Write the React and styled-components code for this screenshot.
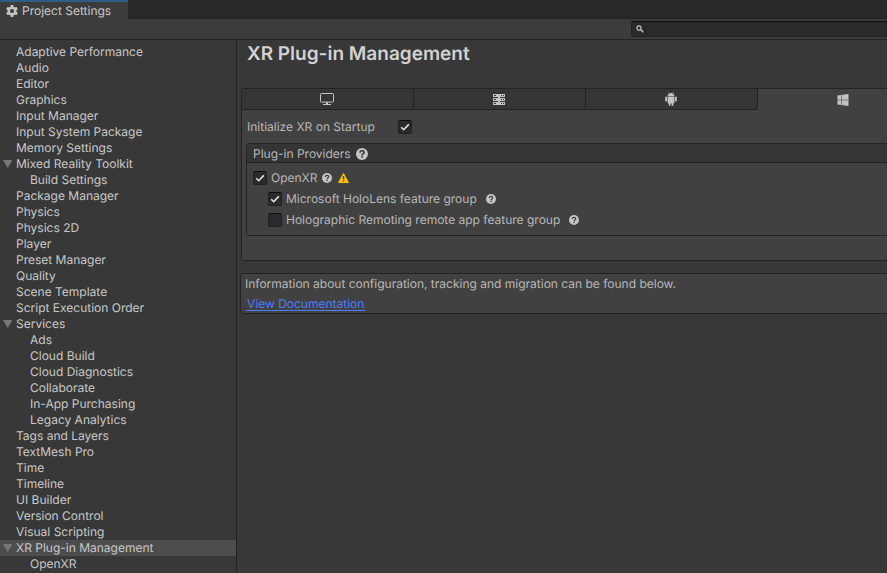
import React, { useId, useState } from "react";
import styled, { createGlobalStyle } from "styled-components";

const color = {
  strip: "#282828",
  bar: "#3c3c3c",
  page: "#383838",
  panel: "#414141",
  header: "#353535",
  line: "#232323",
  accent: "#2c5d87",
  text: "#c8c8c8",
  label: "#b8b8b8",
  icon: "#c4c4c4",
  selected: "#4d4d4d",
  link: "#4c7eff",
};

const GlobalStyle = createGlobalStyle`
  *, *::before, *::after { box-sizing: border-box; }
  html, body { margin: 0; background: ${color.page}; }
  body { overflow: hidden; }
  body, button, input {
    font-family: Inter, "Liberation Sans", sans-serif;
    font-size: 12px;
    line-height: 16px;
    color: ${color.text};
    text-rendering: geometricPrecision;
  }
  svg { display: block; flex: none; }
`;

const Window = styled.div`
  display: flex;
  flex-direction: column;
  height: 100vh;
`;

const TabStrip = styled.header`
  display: flex;
  height: 19px;
  flex: none;
  background: ${color.strip};
  box-shadow: inset 0 -1px ${color.line};
`;

const WindowTab = styled.h1`
  display: flex;
  align-items: center;
  gap: 4px;
  margin: 0;
  padding: 1px 17px 0 6px;
  border-top: 2px solid ${color.accent};
  background: ${color.bar};
  font-size: 12px;
  font-weight: 400;
`;

const Toolbar = styled.div`
  display: flex;
  justify-content: flex-end;
  flex: none;
  height: 21px;
  padding: 2px 0;
  background: ${color.bar};
  border-bottom: 1px solid ${color.line};
`;

const SearchField = styled.label`
  display: flex;
  align-items: center;
  gap: 4px;
  width: 256px;
  height: 16px;
  padding-left: 4px;
  border: 1px solid #212121;
  border-top-color: #0d0d0d;
  border-right: 0;
  border-radius: 3px 0 0 3px;
  background: #2a2a2a;
`;

const SearchInput = styled.input`
  flex: 1;
  min-width: 0;
  height: 14px;
  padding: 0;
  border: 0;
  outline: 0;
  background: transparent;
`;

const Columns = styled.div`
  display: grid;
  grid-template-columns: 237px minmax(0, 1fr);
  flex: 1;
  min-height: 0;
`;

const Sidebar = styled.nav`
  padding-top: 4px;
  overflow: hidden;
  border-right: 1px solid ${color.line};
`;

const TreeRow = styled.div`
  display: flex;
  align-items: center;
  height: 16px;
  padding-left: ${(p) => (p.$nested ? 14 : 0)}px;
  background: ${(p) => (p.$selected ? color.selected : "transparent")};
`;

const Foldout = styled.button`
  display: flex;
  align-items: center;
  width: 16px;
  height: 16px;
  padding: 0 0 0 3px;
  border: 0;
  background: none;
`;

const FoldoutSpace = styled.span`
  width: 16px;
`;

const TreeItem = styled.button`
  flex: 1;
  height: 16px;
  padding: 0;
  border: 0;
  background: none;
  text-align: left;
  white-space: nowrap;
`;

const Main = styled.main`
  overflow: hidden;
  padding-left: 3px;
`;

const PageTitle = styled.h2`
  margin: 0 0 20px;
  padding: 2px 7px;
  font-size: 19px;
  line-height: 24px;
  font-weight: 600;
  color: #d2d2d2;
`;

/* The settings body is wider than the window and is clipped at its right edge. */
const Body = styled.div`
  display: flex;
  flex-direction: column;
  gap: 12px;
  margin-right: -44px;
`;

const Panel = styled.section`
  margin-left: 1px;
  padding-bottom: 24px;
  border: 1px solid ${color.line};
  border-radius: 3px;
  background: ${color.panel};
`;

const PlatformTabs = styled.div`
  display: grid;
  grid-template-columns: repeat(4, 1fr);
`;

const PlatformTab = styled.button`
  display: flex;
  align-items: center;
  justify-content: center;
  height: 21px;
  padding: 0 2px 0 0;
  border: 0 solid ${color.line};
  border-width: ${(p) => (p["aria-selected"] ? "0" : "0 1px 1px 0")};
  background: ${(p) => (p["aria-selected"] ? color.panel : color.header)};
`;

const SettingRow = styled.div`
  display: grid;
  grid-template-columns: 151px auto;
  align-items: center;
  justify-content: start;
  height: 33px;
  padding-left: 5px;
`;

const Label = styled.label`
  color: ${color.label};
  white-space: nowrap;
`;

const Providers = styled.section`
  margin-left: 4px;
  border: 1px solid ${color.line};
  border-radius: 3px;
`;

const ProvidersHeader = styled.h3`
  display: flex;
  align-items: center;
  gap: 5px;
  height: 19px;
  margin: 0;
  padding: 1px 6px 0;
  border-bottom: 1px solid ${color.line};
  background: ${color.header};
  color: ${color.label};
  font-size: 12px;
  font-weight: 400;
`;

const ProviderList = styled.div`
  padding: 4px 6px 5px;
`;

const ProviderRow = styled.div`
  display: flex;
  align-items: center;
  gap: 4px;
  height: 21px;
  padding-left: ${(p) => (p.$nested ? 15 : 0)}px;
`;

const Badges = styled.span`
  display: flex;
  align-items: center;
  gap: 6px;
  margin-left: ${(p) => (p.$nested ? 5 : 0)}px;
`;

const CheckFrame = styled.span`
  position: relative;
  display: block;
  width: 14px;
  height: 14px;
`;

const CheckInput = styled.input`
  appearance: none;
  display: block;
  width: 14px;
  height: 14px;
  margin: 0;
  border: 1px solid #212121;
  border-top-color: #0d0d0d;
  border-radius: 2px;
  background: #2a2a2a;
`;

const CheckMark = styled.svg`
  position: absolute;
  inset: 0;
  pointer-events: none;
`;

const InfoBox = styled.section`
  padding: 2px 4px;
  border: 1px solid ${color.line};
  border-radius: 3px;
  background: ${color.panel};
  color: ${color.label};
`;

const InfoText = styled.p`
  margin: 0 0 6px;
`;

const DocLink = styled.a`
  display: block;
  width: fit-content;
  margin-left: 1px;
  padding: 0 1px;
  border-bottom: 1px solid ${color.link};
  color: ${color.link};
  line-height: 12px;
  text-decoration: none;
`;

const GearIcon = () => (
  <svg width="12" height="12" viewBox="0 0 12 12" aria-hidden="true">
    <g fill={color.icon}>
      <rect x="4.6" y="0" width="2.8" height="12" rx=".6" />
      <rect x="4.6" y="0" width="2.8" height="12" rx=".6" transform="rotate(60 6 6)" />
      <rect x="4.6" y="0" width="2.8" height="12" rx=".6" transform="rotate(120 6 6)" />
      <circle cx="6" cy="6" r="4.5" />
    </g>
    <circle cx="6" cy="6" r="2.1" fill={color.bar} />
  </svg>
);

const SearchIcon = () => (
  <svg width="8" height="8" viewBox="0 0 8 8" fill="none" stroke={color.icon} aria-hidden="true">
    <circle cx="3" cy="3" r="2.1" strokeWidth="1.1" />
    <path d="M4.6 4.6 7.2 7.2" strokeWidth="1.4" />
  </svg>
);

const TriangleIcon = () => (
  <svg width="10" height="8" viewBox="0 0 10 8" aria-hidden="true">
    <path d="M0 0h9.4L4.7 8z" fill="#767676" />
  </svg>
);

const MonitorIcon = () => (
  <svg width="14" height="12" viewBox="0 0 14 12" aria-hidden="true">
    <rect x=".5" y=".5" width="13" height="8.6" rx=".8" fill="none" stroke={color.icon} />
    <path d="M6 9h2v2H6zM3 11h8v1H3z" fill={color.icon} />
  </svg>
);

const ServerIcon = () => (
  <svg width="12" height="11" viewBox="0 0 12 11" aria-hidden="true">
    <path d="M0 0h12v3H0zM0 4h12v3H0zM0 8h12v3H0zM5 3h2v5H5z" fill={color.icon} />
    <path
      d="M1 1h2v1H1zM1 5h2v1H1zM1 9h2v1H1zM8 1h1v1H8zM10 1h1v1h-1zM8 5h1v1H8zM10 5h1v1h-1zM8 9h1v1H8zM10 9h1v1h-1z"
      fill={color.header}
    />
  </svg>
);

const AndroidIcon = () => (
  <svg width="12" height="14" viewBox="0 0 12 14" fill={color.icon} aria-hidden="true">
    <path d="M2.6 4C2.6 2.4 3.9 1 6 1s3.4 1.4 3.4 3z" />
    <path d="M3.5.2 4.4 1.7M8.5.2 7.6 1.7" stroke={color.icon} strokeWidth=".6" />
    <path d="M2.6 4.6h6.8v6.1a.7.7 0 0 1-.7.7H3.3a.7.7 0 0 1-.7-.7z" />
    <rect x="3.8" y="10" width="1.6" height="4" rx=".7" />
    <rect x="6.6" y="10" width="1.6" height="4" rx=".7" />
    <rect x=".2" y="4.6" width="1.8" height="5" rx=".8" />
    <rect x="10" y="4.6" width="1.8" height="5" rx=".8" />
    <circle cx="4.5" cy="2.7" r=".4" fill={color.header} />
    <circle cx="7.5" cy="2.7" r=".4" fill={color.header} />
  </svg>
);

const WindowsIcon = () => (
  <svg width="12" height="12" viewBox="0 0 12 12" aria-hidden="true">
    <path d="M.5 1.6 11.5 0v12L.5 10.4z" fill={color.icon} />
    <path d="M4.6 0v12M0 6h12" stroke="#777777" strokeWidth="1" />
  </svg>
);

const HelpIcon = ({ size = 10, ground = color.panel }) => (
  <svg width={size} height={size} viewBox="0 0 12 12" role="img" aria-label="Help">
    <circle cx="6" cy="6" r="6" fill={color.icon} />
    <path
      d="M4 4.7C4 3.4 4.8 2.7 6 2.7s2.1.7 2.1 1.7C8.1 5.7 6.1 5.7 6.1 7.4"
      fill="none"
      stroke={ground}
      strokeWidth="1.5"
    />
    <rect x="5.3" y="8.2" width="1.6" height="1.5" fill={ground} />
  </svg>
);

const WarningIcon = () => (
  <svg width="11" height="10" viewBox="0 0 11 10" role="img" aria-label="Warning">
    <path d="M5.5.6 10.4 9.5H.6z" fill="#ffc107" stroke="#ffc107" strokeLinejoin="round" />
    <path d="M4.8 3h1.4v3.6H4.8zM4.8 7.5h1.4v1.3H4.8z" fill="#3a3a3a" />
  </svg>
);

function Checkbox({ id, initial }) {
  const [checked, setChecked] = useState(initial);
  return (
    <CheckFrame>
      <CheckInput id={id} type="checkbox" checked={checked} onChange={(e) => setChecked(e.target.checked)} />
      {checked && (
        <CheckMark width="14" height="14" viewBox="0 0 14 14" aria-hidden="true">
          <path d="M3.2 7.2 5.7 9.7 10.8 4.4" fill="none" stroke="#e4e4e4" strokeWidth="1.6" />
        </CheckMark>
      )}
    </CheckFrame>
  );
}

function Provider({ name, initial, nested, warning }) {
  const id = useId();
  return (
    <ProviderRow $nested={nested}>
      <Checkbox id={id} initial={initial} />
      <Label htmlFor={id}>{name}</Label>
      <Badges $nested={nested}>
        <HelpIcon />
        {warning && <WarningIcon />}
      </Badges>
    </ProviderRow>
  );
}

const tree = [
  { name: "Adaptive Performance" },
  { name: "Audio" },
  { name: "Editor" },
  { name: "Graphics" },
  { name: "Input Manager" },
  { name: "Input System Package" },
  { name: "Memory Settings" },
  { name: "Mixed Reality Toolkit", children: ["Build Settings"] },
  { name: "Package Manager" },
  { name: "Physics" },
  { name: "Physics 2D" },
  { name: "Player" },
  { name: "Preset Manager" },
  { name: "Quality" },
  { name: "Scene Template" },
  { name: "Script Execution Order" },
  {
    name: "Services",
    children: ["Ads", "Cloud Build", "Cloud Diagnostics", "Collaborate", "In-App Purchasing", "Legacy Analytics"],
  },
  { name: "Tags and Layers" },
  { name: "TextMesh Pro" },
  { name: "Time" },
  { name: "Timeline" },
  { name: "UI Builder" },
  { name: "Version Control" },
  { name: "Visual Scripting" },
  { name: "XR Plug-in Management", children: ["OpenXR"], selected: true },
];

function TreeNode({ node }) {
  const [open, setOpen] = useState(true);
  return (
    <>
      <TreeRow $selected={node.selected}>
        {node.children ? (
          <Foldout aria-label={`Toggle ${node.name}`} aria-expanded={open} onClick={() => setOpen(!open)}>
            <TriangleIcon />
          </Foldout>
        ) : (
          <FoldoutSpace />
        )}
        <TreeItem aria-current={node.selected ? "page" : undefined}>{node.name}</TreeItem>
      </TreeRow>
      {open &&
        node.children?.map((child) => (
          <TreeRow key={child} $nested>
            <FoldoutSpace />
            <TreeItem>{child}</TreeItem>
          </TreeRow>
        ))}
    </>
  );
}

const platforms = [
  { name: "Desktop", Icon: MonitorIcon },
  { name: "Dedicated Server", Icon: ServerIcon },
  { name: "Android", Icon: AndroidIcon },
  { name: "Universal Windows Platform", Icon: WindowsIcon, selected: true },
];

export default function App() {
  return (
    <>
      <GlobalStyle />
      <Window>
        <TabStrip>
          <WindowTab>
            <GearIcon />
            Project Settings
          </WindowTab>
        </TabStrip>
        <Toolbar>
          <SearchField>
            <SearchIcon />
            <SearchInput type="text" aria-label="Search settings" />
          </SearchField>
        </Toolbar>
        <Columns>
          <Sidebar>
            {tree.map((node) => (
              <TreeNode key={node.name} node={node} />
            ))}
          </Sidebar>
          <Main>
            <PageTitle>XR Plug-in Management</PageTitle>
            <Body>
              <Panel>
                <PlatformTabs role="tablist">
                  {platforms.map(({ name, Icon, selected }) => (
                    <PlatformTab key={name} role="tab" aria-label={name} aria-selected={Boolean(selected)}>
                      <Icon />
                    </PlatformTab>
                  ))}
                </PlatformTabs>
                <SettingRow>
                  <Label htmlFor="initialize-xr">Initialize XR on Startup</Label>
                  <Checkbox id="initialize-xr" initial />
                </SettingRow>
                <Providers>
                  <ProvidersHeader>
                    Plug-in Providers
                    <HelpIcon size={12} ground={color.header} />
                  </ProvidersHeader>
                  <ProviderList>
                    <Provider name="OpenXR" initial warning />
                    <Provider name="Microsoft HoloLens feature group" initial nested />
                    <Provider name="Holographic Remoting remote app feature group" initial={false} nested />
                  </ProviderList>
                </Providers>
              </Panel>
              <InfoBox>
                <InfoText>Information about configuration, tracking and migration can be found below.</InfoText>
                <DocLink href="#documentation">View Documentation</DocLink>
              </InfoBox>
            </Body>
          </Main>
        </Columns>
      </Window>
    </>
  );
}
